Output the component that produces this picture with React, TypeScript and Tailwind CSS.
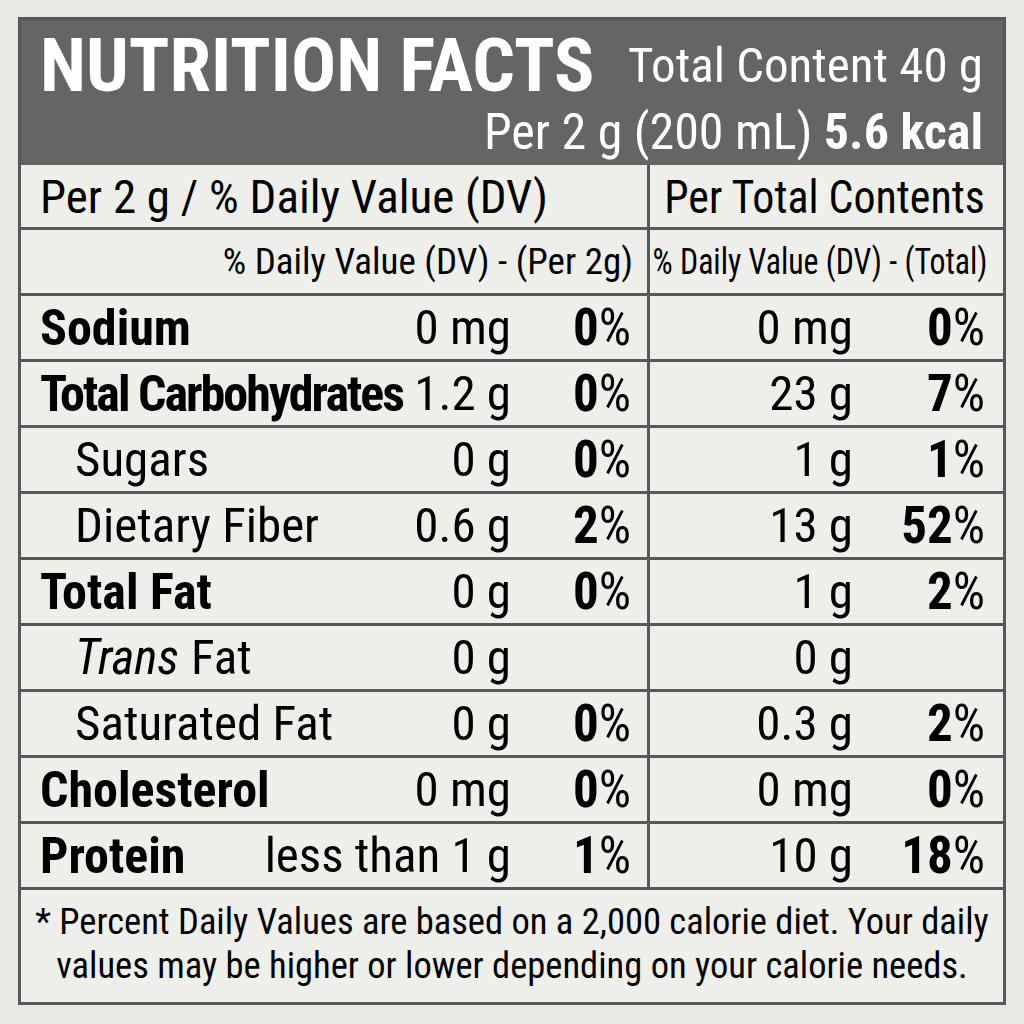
const FONT = { fontFamily: '"Roboto Condensed", Roboto, "Liberation Sans", sans-serif' };

type Row = {
  label: string;
  bold?: boolean;
  tight?: boolean;
  indent?: boolean;
  trans?: boolean;
  amt: string;
  pct: string;
  totAmt: string;
  totPct: string;
};

const rows: Row[] = [
  { label: 'Sodium', bold: true, amt: '0 mg', pct: '0', totAmt: '0 mg', totPct: '0' },
  { label: 'Total Carbohydrates', bold: true, tight: true, amt: '1.2 g', pct: '0', totAmt: '23 g', totPct: '7' },
  { label: 'Sugars', indent: true, amt: '0 g', pct: '0', totAmt: '1 g', totPct: '1' },
  { label: 'Dietary Fiber', indent: true, amt: '0.6 g', pct: '2', totAmt: '13 g', totPct: '52' },
  { label: 'Total Fat', bold: true, amt: '0 g', pct: '0', totAmt: '1 g', totPct: '2' },
  { label: 'Fat', indent: true, trans: true, amt: '0 g', pct: '', totAmt: '0 g', totPct: '' },
  { label: 'Saturated Fat', indent: true, amt: '0 g', pct: '0', totAmt: '0.3 g', totPct: '2' },
  { label: 'Cholesterol', bold: true, amt: '0 mg', pct: '0', totAmt: '0 mg', totPct: '0' },
  { label: 'Protein', bold: true, amt: 'less than 1 g', pct: '1', totAmt: '10 g', totPct: '18' },
];

// bold figure, regular percent sign
function Pct({ v }: { v: string }) {
  if (!v) return <span />;
  return (
    <span className="text-right text-[51px]">
      <b>{v}</b>%
    </span>
  );
}

export default function App() {
  return (
    <div className="min-h-screen bg-[#e8e8e4] pl-[18px] pt-[17px] whitespace-nowrap" style={FONT}>
      <div className="w-[988px] border-[3px] border-[#585858] bg-[#eeeeea] text-black">
        {/* Header */}
        <div className="h-[145px] bg-[#656565] text-white pl-[19px] pr-[20px] pt-[8px]">
          <div className="flex items-start justify-between">
            <span className="text-[75px] font-bold leading-none">NUTRITION FACTS</span>
            <span className="text-[49px] leading-none mt-[13px]">Total Content 40 g</span>
          </div>
          <div className="mt-[4px] text-right text-[50px] leading-none">
            Per 2 g (200 mL) <span className="font-bold">5.6 kcal</span>
          </div>
        </div>

        {/* Column headings */}
        <div className="flex h-[65px] border-b-[3px] border-[#585858] text-[47px] leading-none">
          <div className="w-[629px] shrink-0 border-r-[3px] border-[#585858] pl-[19px] flex items-center">
            Per 2 g / % Daily Value (DV)
          </div>
          <div className="flex-1 min-w-0 flex items-center justify-end pr-[18px]">
            <span className="origin-right scale-x-[0.935]">Per Total Contents</span>
          </div>
        </div>
        <div className="flex h-[66px] border-b-[3px] border-[#585858] text-[37px] leading-none">
          <div className="w-[629px] shrink-0 border-r-[3px] border-[#585858] pr-[14px] flex items-center justify-end">
            % Daily Value (DV) - (Per 2g)
          </div>
          <div className="flex-1 min-w-0 flex items-center justify-end pr-[16px]">
            <span className="origin-right scale-x-[0.86]">% Daily Value (DV) - (Total)</span>
          </div>
        </div>

        {/* Nutrients */}
        {rows.map((r) => (
          <div key={r.label + r.amt} className="flex h-[66px] border-b-[3px] border-[#585858] text-[49px] leading-none">
            <div className="w-[629px] shrink-0 border-r-[3px] border-[#585858] pl-[19px] pr-[16px] grid grid-cols-[1fr_auto_120px] items-center">
              <span
                className={
                  r.bold
                    ? r.tight
                      ? 'font-bold text-[50px] tracking-[-2px]'
                      : 'font-bold text-[50px]'
                    : r.indent
                      ? 'pl-[35px]'
                      : ''
                }
              >
                {r.trans && <i className="pr-[12px]">Trans</i>}
                {r.label}
              </span>
              <span className="text-right">{r.amt}</span>
              <Pct v={r.pct} />
            </div>
            <div className="flex-1 pr-[18px] grid grid-cols-[1fr_132px] items-center">
              <span className="text-right">{r.totAmt}</span>
              <Pct v={r.totPct} />
            </div>
          </div>
        ))}

        {/* Footnote */}
        <div className="h-[112px] flex flex-col justify-center items-center text-[36.5px] leading-[44px] text-center pb-[4px]">
          <p>* Percent Daily Values are based on a 2,000 calorie diet. Your daily</p>
          <p>values may be higher or lower depending on your calorie needs.</p>
        </div>
      </div>
    </div>
  );
}
